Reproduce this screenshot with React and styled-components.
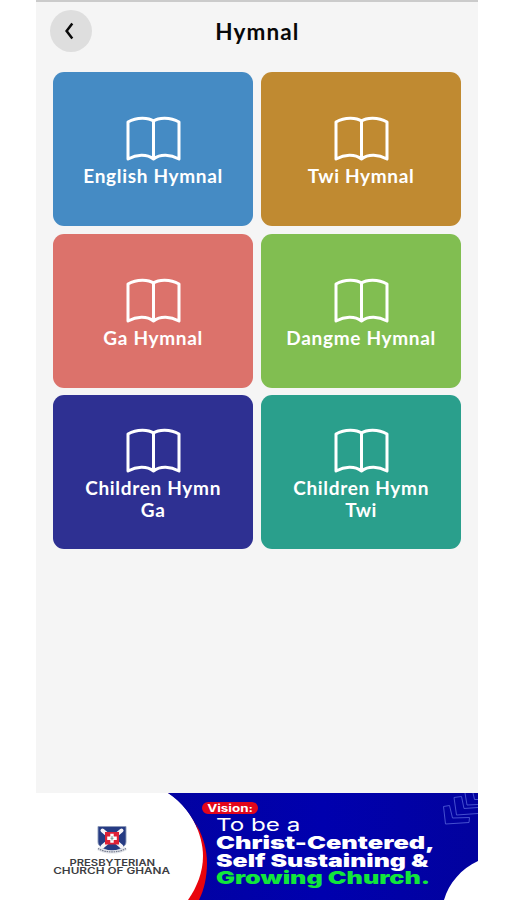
import React from "react";
import styled, { createGlobalStyle } from "styled-components";

const GlobalStyle = createGlobalStyle`
  * {
    box-sizing: border-box;
  }
  body {
    margin: 0;
    background: #ffffff;
    font-family: Lato, "Liberation Sans", sans-serif;
  }
`;

const Screen = styled.div`
  display: flex;
  flex-direction: column;
  width: 442px;
  height: 900px;
  margin-left: 36.4px;
  border-top: 2px solid #cbcbcb;
  background-color: #f5f5f5;
  overflow: hidden;
`;

const Header = styled.header`
  display: grid;
  grid-template-columns: 42px 1fr 42px;
  align-items: center;
  height: 58px;
  padding: 0 14px;
`;

const BackButton = styled.button`
  display: flex;
  align-items: center;
  justify-content: center;
  width: 42px;
  height: 42px;
  padding: 0 2px 0 0;
  border: none;
  border-radius: 50%;
  background-color: #dedede;
`;

const Title = styled.h1`
  margin: 0;
  text-align: center;
  font-size: 22.5px;
  font-weight: 700;
  letter-spacing: 1.1px;
  color: #080808;
`;

const TileGrid = styled.main`
  display: grid;
  grid-template-columns: 200.5px 200.5px;
  grid-auto-rows: 154px;
  gap: 7.6px 7.5px;
  flex: 1;
  padding: 12.2px 16.5px 0;
`;

const Tile = styled.div`
  display: flex;
  flex-direction: column;
  align-items: center;
  justify-content: center;
  border-radius: 11px;
  background-color: ${(props) => props.$color};
`;

const TileLabel = styled.div`
  width: 160px;
  text-align: center;
  font-size: 19px;
  font-weight: 700;
  line-height: 21.5px;
  letter-spacing: 0.68px;
  color: #ffffff;
`;

const Banner = styled.footer`
  position: relative;
  display: flex;
  height: 107px;
  flex-shrink: 0;
  background-color: #ffffff;
`;

const BannerArt = styled.svg`
  position: absolute;
  top: 0;
  left: 0;
`;

const Brand = styled.div`
  position: relative;
  display: flex;
  flex-direction: column;
  align-items: center;
  width: 151px;
  padding: 33px 0 0;
`;

const BrandName = styled.div`
  display: flex;
  flex-direction: column;
  align-items: center;
  margin-top: 5px;
`;

const BrandLine = styled.div`
  font-family: Inter, "Liberation Sans", sans-serif;
  font-size: 9px;
  font-weight: 600;
  line-height: 8.2px;
  white-space: nowrap;
  color: #3d3d42;
  transform: scaleX(${(props) => props.$stretch});
`;

const Message = styled.div`
  position: relative;
  display: flex;
  flex-direction: column;
  align-items: flex-start;
  padding: 9px 0 0 14.7px;
`;

const Badge = styled.div`
  display: flex;
  align-items: center;
  justify-content: center;
  width: 56px;
  height: 12px;
  margin-bottom: 2px;
  border-radius: 6px;
  background-color: #e3061b;
`;

const BadgeText = styled.span`
  font-family: Inter, "Liberation Sans", sans-serif;
  font-size: 10px;
  font-weight: 700;
  line-height: 12px;
  color: #ffffff;
  transform: scaleX(${(props) => props.$stretch});
`;

const MessageLine = styled.div`
  margin-left: 14px;
  font-family: Inter, "Liberation Sans", sans-serif;
  font-size: 17.8px;
  font-weight: ${(props) => props.$weight || 900};
  line-height: 17.8px;
  white-space: nowrap;
  color: ${(props) => props.$color || "#ffffff"};
  transform: scaleX(${(props) => props.$stretch});
  transform-origin: left center;
`;

const BackIcon = () => (
  <svg width="12" height="18" viewBox="0 0 12 18" fill="none">
    <path d="M8.300 1.600L2.600 9l5.700 7.400" stroke="#0a0a0a" strokeWidth="2.500" />
  </svg>
);

const BookIcon = () => (
  <svg width="55" height="53" viewBox="0 0 55 53" fill="none">
    <path
      d="M27.500 9C22.500 5.300 11 4.800 2 10V47C10.500 42.600 20.500 41.700 27.500 47C34.500 41.700 44.500 42.600 53 47V10C44 4.800 32.500 5.300 27.500 9ZM27.500 9V47"
      stroke="#ffffff"
      strokeWidth="3"
      strokeLinejoin="round"
    />
  </svg>
);

const Crest = () => (
  <svg width="31" height="28" viewBox="0 0 31 28">
    <path d="M2 0.500H30V16C30 20 25 23.500 16 26C7 23.500 2 20 2 16Z" fill="#263b83" stroke="#8b98b8" strokeWidth="0.900" />
    <path d="M6.500 4.500L25.500 20.500M25.500 4.500L6.500 20.500" stroke="#f7f4f7" strokeWidth="4" strokeLinecap="round" />
    <rect x="9" y="6" width="14" height="12.500" fill="#df2136" />
    <path d="M16 7.800V16.800M11.200 12.300H20.800" stroke="#ffffff" strokeWidth="3.400" />
    <path d="M16 10V14.500M14.500 12.300H17.500" stroke="#68938a" strokeWidth="0.900" />
    <path d="M2 22.500C9 27 23 27 30 22.500" fill="none" stroke="#e4e6eb" strokeWidth="3.400" />
    <path d="M2 22.500C9 27 23 27 30 22.500" fill="none" stroke="#747b8e" strokeWidth="1.200" strokeDasharray="1.500 0.800" />
  </svg>
);

const BannerShapes = () => (
  <BannerArt width="442" height="107" viewBox="0 0 442 107">
    <defs>
      <linearGradient id="bannerBlue" x1="0" y1="0" x2="1" y2="0">
        <stop offset="0" stopColor="#0202a2" />
        <stop offset="0.5" stopColor="#0000ae" />
        <stop offset="1" stopColor="#02029e" />
      </linearGradient>
    </defs>
    <path d="M132 0H442V68C425 76 413 90 408 107H140Z" fill="url(#bannerBlue)" />
    <path d="M132 0C158 19 171 46 171 70C171 84 168 97 163 107H100V0Z" fill="#e9040c" />
    <path d="M132 0C154 13 167 41 167 63C167 79 161 94 152 107H100V0Z" fill="#ffffff" />
    <path d="M132 0C146 9 157 24 162 37C158 20 148 7 139 0Z" fill="#0202a2" />
    <g fill="none" stroke="#4d58d4" strokeWidth="0.900">
      <path d="M407.500 13.500L413.500 12.500L416.500 25L433.500 24.500L433 29.500L409.500 31Z" />
      <path d="M442 14.500L428 15.500L425.500 3.500L418 4.500L420.500 22L442 20.500" />
      <path d="M429 0L431 12L442 11.500M437 0L438.500 6.500H442" />
    </g>
  </BannerArt>
);

const hymnals = [
  { name: "English Hymnal", color: "#458bc4" },
  { name: "Twi Hymnal", color: "#c08a31" },
  { name: "Ga Hymnal", color: "#dc726b" },
  { name: "Dangme Hymnal", color: "#81be51" },
  { name: "Children Hymn Ga", color: "#2e3092" },
  { name: "Children Hymn Twi", color: "#2a9f8c" },
];

const App = () => {
  return (
    <>
      <GlobalStyle />
      <Screen>
        <Header>
          <BackButton aria-label="Back">
            <BackIcon />
          </BackButton>
          <Title>Hymnal</Title>
        </Header>
        <TileGrid>
          {hymnals.map((hymnal) => (
            <Tile key={hymnal.name} $color={hymnal.color}>
              <BookIcon />
              <TileLabel>{hymnal.name}</TileLabel>
            </Tile>
          ))}
        </TileGrid>
        <Banner>
          <BannerShapes />
          <Brand>
            <Crest />
            <BrandName>
              <BrandLine $stretch={1.25}>PRESBYTERIAN</BrandLine>
              <BrandLine $stretch={1.31}>CHURCH OF GHANA</BrandLine>
            </BrandName>
          </Brand>
          <Message>
            <Badge>
              <BadgeText $stretch={1.34}>Vision:</BadgeText>
            </Badge>
            <MessageLine $weight={400} $stretch={1.36}>
              To be a
            </MessageLine>
            <MessageLine $stretch={1.43}>Christ-Centered,</MessageLine>
            <MessageLine $stretch={1.4}>Self Sustaining &amp;</MessageLine>
            <MessageLine $stretch={1.415} $color="#12e63c">
              Growing Church.
            </MessageLine>
          </Message>
        </Banner>
      </Screen>
    </>
  );
};

export default App;
